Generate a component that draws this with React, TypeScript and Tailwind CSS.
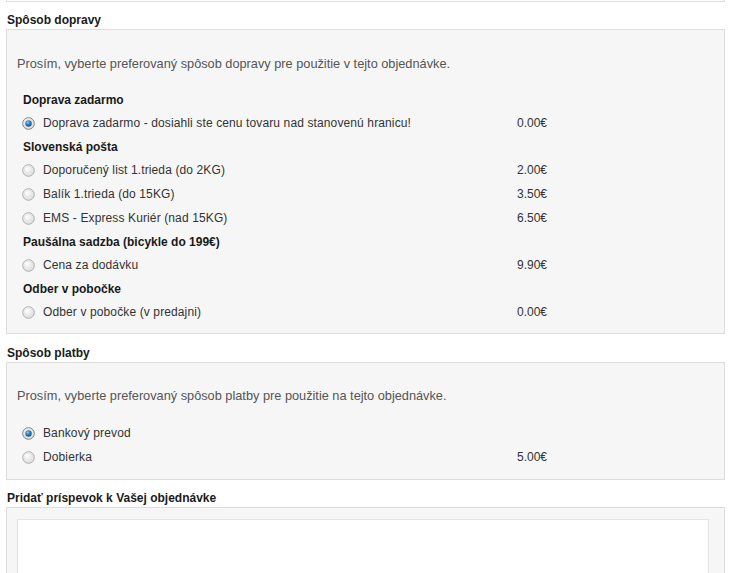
import React from "react";

type Option = {
  label: string;
  price?: string;
  checked?: boolean;
};

type Group = {
  title?: string;
  options: Option[];
};

const shipping: Group[] = [
  {
    title: "Doprava zadarmo",
    options: [
      {
        label: "Doprava zadarmo - dosiahli ste cenu tovaru nad stanovenú hranicu!",
        price: "0.00€",
        checked: true,
      },
    ],
  },
  {
    title: "Slovenská pošta",
    options: [
      { label: "Doporučený list 1.trieda (do 2KG)", price: "2.00€" },
      { label: "Balík 1.trieda (do 15KG)", price: "3.50€" },
      { label: "EMS - Express Kuriér (nad 15KG)", price: "6.50€" },
    ],
  },
  {
    title: "Paušálna sadzba (bicykle do 199€)",
    options: [{ label: "Cena za dodávku", price: "9.90€" }],
  },
  {
    title: "Odber v pobočke",
    options: [{ label: "Odber v pobočke (v predajni)", price: "0.00€" }],
  },
];

const payment: Option[] = [
  { label: "Bankový prevod", checked: true },
  { label: "Dobierka", price: "5.00€" },
];

// old-school windows radio, drawn so it looks the same everywhere
function Radio({ checked }: { checked?: boolean }) {
  return (
    <svg width="13" height="13" viewBox="0 0 13 13" className="shrink-0">
      <defs>
        <radialGradient id="rfill" cx="0.35" cy="0.3" r="0.8">
          <stop offset="0" stopColor="#ffffff" />
          <stop offset="1" stopColor="#d6d6d6" />
        </radialGradient>
        <radialGradient id="rdot" cx="0.4" cy="0.35" r="0.7">
          <stop offset="0" stopColor="#8fd0ff" />
          <stop offset="0.5" stopColor="#2a78bd" />
          <stop offset="1" stopColor="#174a80" />
        </radialGradient>
      </defs>
      <circle cx="6.5" cy="6.5" r="5.8" fill="url(#rfill)" stroke={checked ? "#7f7f7f" : "#aeaeae"} strokeWidth="1" />
      <circle cx="6.5" cy="6.5" r="4.3" fill="none" stroke="#e6e6e6" strokeWidth="1" />
      {checked && <circle cx="6.5" cy="6.5" r="3.2" fill="url(#rdot)" />}
    </svg>
  );
}

function OptionRow({ option }: { option: Option }) {
  return (
    <label className="flex h-6 items-center pl-[5px]">
      <Radio checked={option.checked} />
      <span className="ml-2 w-[474px] tracking-[0.12px]">{option.label}</span>
      <span>{option.price}</span>
    </label>
  );
}

function Heading({ children, top }: { children: React.ReactNode; top: string }) {
  return (
    <h3 className={`${top} pb-[2px] pl-px font-bold leading-[14px] text-[#1a1a1a]`}>
      {children}
    </h3>
  );
}

export default function App() {
  return (
    <div className="h-[573px] w-[738px] overflow-hidden bg-white font-['Liberation_Sans',Arial,sans-serif] text-[12px] leading-[14px] text-[#333]">
      <div className="ml-[6px] w-[719px]">

        {/* tail of the box above */}
        <div className="h-[2px] border-x border-b border-[#dddddd]" />

        <Heading top="pt-[11px]">Spôsob dopravy</Heading>

        <div className="border border-[#dddddd] bg-[#f6f6f6] pb-[9px] pl-[10px] pt-[27px]">
          <p className="text-[12.75px] text-[#555]">
            Prosím, vyberte preferovaný spôsob dopravy pre použitie v tejto objednávke.
          </p>

          <div className="mt-[17px]">
            {shipping.map((group) => (
              <div key={group.title}>
                <div className="flex h-[23px] items-center pl-[6px] font-bold text-[#1a1a1a]">
                  {group.title}
                </div>
                {group.options.map((option) => (
                  <OptionRow key={option.label} option={option} />
                ))}
              </div>
            ))}
          </div>
        </div>

        <Heading top="pt-[12px]">Spôsob platby</Heading>

        <div className="border border-[#dddddd] bg-[#f6f6f6] pb-[10px] pl-[10px] pt-[26px]">
          <p className="text-[12.75px] text-[#555]">
            Prosím, vyberte preferovaný spôsob platby pre použitie na tejto objednávke.
          </p>
          <div className="mt-[18px]">
            {payment.map((option) => (
              <OptionRow key={option.label} option={option} />
            ))}
          </div>
        </div>

        <Heading top="pt-[11px]">Pridať príspevok k Vašej objednávke</Heading>

        <div className="border border-[#dddddd] bg-[#f6f6f6] pl-[10px] pt-[11px] pb-4">
          <textarea className="block h-[120px] w-[692px] resize-none border border-[#e4e4e4] bg-white outline-none" />
        </div>

      </div>
    </div>
  );
}
